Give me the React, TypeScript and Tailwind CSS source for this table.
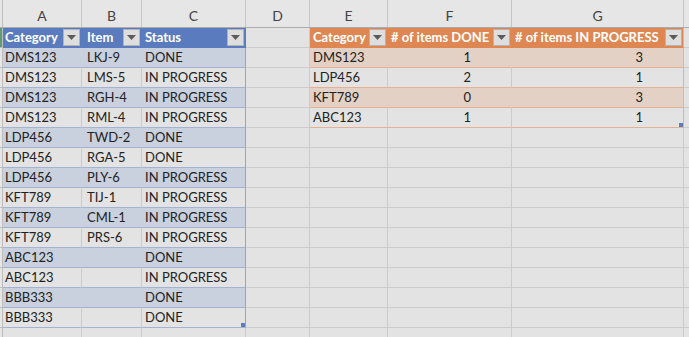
import React from "react";

// column widths include the 1px right gridline
const COLS = [
  { key: "A", w: "w-[79px]" },
  { key: "B", w: "w-[60px]" },
  { key: "C", w: "w-[104px]" },
  { key: "D", w: "w-[64px]" },
  { key: "E", w: "w-[78px]" },
  { key: "F", w: "w-[124px]" },
  { key: "G", w: "w-[172px]" },
];

const items = [
  ["DMS123", "LKJ-9", "DONE"],
  ["DMS123", "LMS-5", "IN PROGRESS"],
  ["DMS123", "RGH-4", "IN PROGRESS"],
  ["DMS123", "RML-4", "IN PROGRESS"],
  ["LDP456", "TWD-2", "DONE"],
  ["LDP456", "RGA-5", "DONE"],
  ["LDP456", "PLY-6", "IN PROGRESS"],
  ["KFT789", "TIJ-1", "IN PROGRESS"],
  ["KFT789", "CML-1", "IN PROGRESS"],
  ["KFT789", "PRS-6", "IN PROGRESS"],
  ["ABC123", "", "DONE"],
  ["ABC123", "", "IN PROGRESS"],
  ["BBB333", "", "DONE"],
  ["BBB333", "", "DONE"],
];

const summary = [
  ["DMS123", "1", "3"],
  ["LDP456", "2", "1"],
  ["KFT789", "0", "3"],
  ["ABC123", "1", "1"],
];

function FilterBtn() {
  return (
    <div className="absolute right-[1px] top-[1px] w-[17px] h-[17px] bg-[#dedede] border border-[#b3b3b3] flex items-center justify-center">
      <svg width="9" height="5" viewBox="0 0 9 5">
        <path d="M0 0h9L4.5 5z" fill="#5c5c5c" />
      </svg>
    </div>
  );
}

function Handle() {
  return <div className="absolute right-0 bottom-0 w-[4px] h-[4px] bg-[#5b7cbd]" />;
}

type CellProps = {
  w: string;
  cls: string;
  children?: React.ReactNode;
};

function Cell({ w, cls, children }: CellProps) {
  return (
    <div className={`relative h-[20px] shrink-0 border-r border-b flex items-center whitespace-nowrap overflow-visible ${w} ${cls}`}>
      {children}
    </div>
  );
}

const gridCls = "bg-[#e3e3e3] border-[#cbcbcb]";

export default function App() {
  const rows = [];
  for (let r = 0; r < 16; r++) {
    const cells: React.ReactNode[] = [];

    // left table: A-C
    for (let c = 0; c < 3; c++) {
      const w = COLS[c].w;
      const pad = c === 0 ? "pl-[2px]" : c === 1 ? "pl-[5px]" : "pl-[3px]";
      const last = c === 2;
      if (r === 0) {
        const label = ["Category", "Item", "Status"][c];
        cells.push(
          <Cell key={c} w={w} cls={`bg-[#5a7cbe] border-[#5a7cbe] text-white font-bold ${pad}`}>
            {label}
            <FilterBtn />
          </Cell>
        );
      } else if (r <= items.length) {
        const band = r % 2 === 1;
        const bg = band ? "bg-[#c9d0de]" : "bg-[#e3e3e3]";
        const rb = last ? "border-r-[#8fa3cf]" : band ? "border-r-[#c9d0de]" : "border-r-[#cbcbcb]";
        cells.push(
          <Cell key={c} w={w} cls={`${bg} ${rb} border-b-[#a4b3d1] text-[#222] ${pad}`}>
            {items[r - 1][c]}
            {last && r === items.length && <Handle />}
          </Cell>
        );
      } else {
        cells.push(<Cell key={c} w={w} cls={gridCls} />);
      }
    }

    // D
    cells.push(<Cell key="d" w={COLS[3].w} cls={gridCls} />);

    // right table: E-G
    for (let c = 0; c < 3; c++) {
      const w = COLS[4 + c].w;
      const last = c === 2;
      if (r === 0) {
        const label = ["Category", "# of items DONE", "# of items IN PROGRESS"][c];
        cells.push(
          <Cell key={"e" + c} w={w} cls={`bg-[#df8752] border-[#df8752] text-white font-bold pl-[3px] ${last ? "border-r-[#e6b095]" : ""}`}>
            {label}
            <FilterBtn />
          </Cell>
        );
      } else if (r <= summary.length) {
        const band = r % 2 === 1;
        const bg = band ? "bg-[#e4d1c5]" : "bg-[#e3e3e3]";
        const rb = last ? "border-r-[#e6b095]" : band ? "border-r-[#e4d1c5]" : "border-r-[#cbcbcb]";
        cells.push(
          <Cell key={"e" + c} w={w} cls={`${bg} ${rb} border-b-[#e6b095] text-[#222] ${c === 0 ? "pl-[3px]" : "justify-end pr-[40px]"}`}>
            {summary[r - 1][c]}
            {last && r === summary.length && <Handle />}
          </Cell>
        );
      } else {
        cells.push(<Cell key={"e" + c} w={w} cls={gridCls} />);
      }
    }

    rows.push(
      <div key={r} className="flex">
        <div className={`w-[3px] h-[20px] shrink-0 border-r border-b border-[#bdbdbd] ${r === 0 ? "bg-[#5a9c74]" : "bg-[#e6e6e6]"}`} />
        {cells}
        <div className="flex-1 h-[20px] border-b border-[#cbcbcb] bg-[#e3e3e3]" />
      </div>
    );
  }

  return (
    <div
      className="w-[689px] h-[337px] overflow-hidden bg-[#e3e3e3] text-[13px] leading-none"
      style={{ fontFamily: "Lato, 'Liberation Sans', sans-serif" }}
    >
      {/* column letters */}
      <div className="flex h-[28px] bg-[#e6e6e6] border-b border-[#ababab]">
        <div className="w-[3px] shrink-0 border-r border-[#bdbdbd]" />
        {COLS.map((col) => (
          <div
            key={col.key}
            className={`${col.w} shrink-0 border-r border-[#c6c6c6] flex items-center justify-center pt-[4px] text-[#444] text-[14px]`}
          >
            {col.key}
          </div>
        ))}
        <div className="flex-1" />
      </div>
      {rows}
    </div>
  );
}
